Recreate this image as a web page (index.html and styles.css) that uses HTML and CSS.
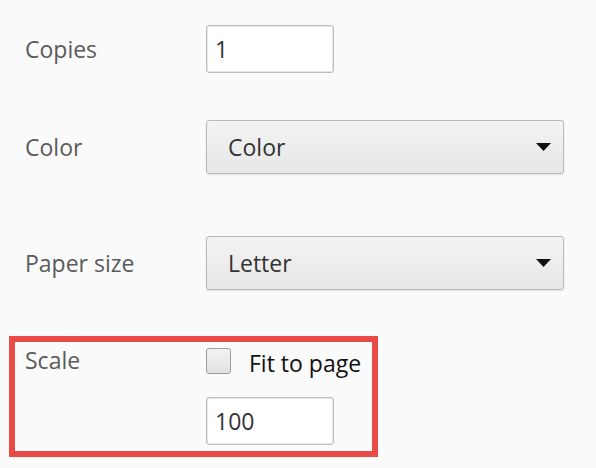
FILE: index.html
```html
<!DOCTYPE html>
<html lang="en">
<head>
  <meta charset="UTF-8" />
  <title>Print settings</title>
  <link rel="stylesheet" href="styles.css">
</head>
<body>
  <div class="settings">
    <div class="row row-copies">
      <span class="label">Copies</span>
      <div class="text-input">1</div>
    </div>

    <div class="row row-color">
      <span class="label">Color</span>
      <div class="select">
        <span>Color</span>
        <svg class="arrow" width="15" height="8" viewBox="0 0 15 8"><path d="M0 0H15L7.5 8Z" fill="#111"/></svg>
      </div>
    </div>

    <div class="row row-paper">
      <span class="label">Paper size</span>
      <div class="select">
        <span>Letter</span>
        <svg class="arrow" width="15" height="8" viewBox="0 0 15 8"><path d="M0 0H15L7.5 8Z" fill="#111"/></svg>
      </div>
    </div>

    <div class="scale-box">
      <span class="label label-top">Scale</span>
      <div class="scale-controls">
        <label class="check">
          <span class="checkbox"></span>
          <span class="check-text">Fit to page</span>
        </label>
        <div class="text-input">100</div>
      </div>
    </div>
  </div>
</body>
</html>
```

FILE: styles.css
```css
body {
  margin: 0;
  background-color: #fafafa;
  font-family: 'Open Sans', 'Noto Sans', sans-serif;
  font-size: 23px;
  color: #333;
}
.settings {
  padding-top: 25px;
}
.row {
  display: grid;
  grid-template-columns: 181px auto;
  align-items: center;
  padding-left: 25px;
}
.row-color {
  margin-top: 47px;
}
.row-paper {
  margin-top: 62px;
}
.label {
  color: #5b5b5b;
}
.text-input {
  box-sizing: border-box;
  width: 128px;
  height: 48px;
  padding: 0 8px;
  display: flex;
  align-items: center;
  background: #fff;
  border: 1px solid #bdbdbd;
  border-radius: 3px;
  box-shadow: inset 0 0 0 1px #e6e6e6;
}
.select {
  box-sizing: border-box;
  width: 358px;
  height: 54px;
  padding: 0 12px 0 21px;
  display: flex;
  align-items: center;
  justify-content: space-between;
  background: linear-gradient(#f3f3f3, #e7e7e7);
  border: 1px solid #b9b9b9;
  border-radius: 3px;
  box-shadow: 0 1px 2px rgba(0,0,0,0.1);
}
.scale-box {
  display: grid;
  grid-template-columns: 181px auto;
  width: 347px;
  margin: 46px 0 0 9px;
  padding: 6px 0 6px 10px;
  border: 6px solid #e84a45;
}
.label-top {
  margin-top: -4px;
}
.scale-controls {
  display: flex;
  flex-direction: column;
  gap: 23px;
}
.check {
  display: flex;
  align-items: center;
  gap: 18px;
  color: #111;
  height: 26px;
}
.check-text {
  margin-top: 3px;
}
.checkbox {
  box-sizing: border-box;
  width: 25px;
  height: 26px;
  border: 1px solid #9c9c9c;
  border-radius: 3px;
  background: linear-gradient(#f2f2f2, #e2e2e2);
}
```
